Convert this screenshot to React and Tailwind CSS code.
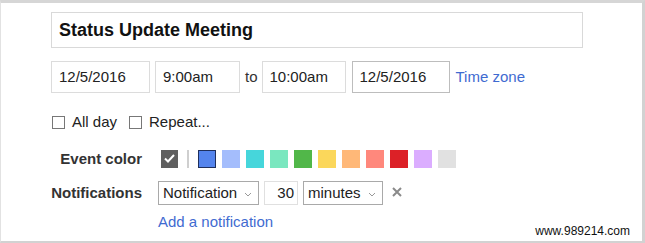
import React from "react";

const colors = [
  "#a4bdfc",
  "#46d6db",
  "#7ae7bf",
  "#51b749",
  "#fbd75b",
  "#ffb878",
  "#ff887c",
  "#dc2127",
  "#dbadff",
  "#e1e1e1",
];

function Box({ className = "", children }) {
  return (
    <div
      className={
        "h-[32px] flex items-center px-[7px] border bg-white text-[15px] text-[#222] " +
        className
      }
    >
      {children}
    </div>
  );
}

function Select({ className = "", children }) {
  return (
    <div
      className={
        "h-[24px] flex items-center justify-between pl-[4px] pr-[6px] border border-[#a9a9a9] bg-white text-[15px] text-[#222] " +
        className
      }
    >
      <span>{children}</span>
      <svg width="8" height="5" viewBox="0 0 8 5" className="mt-[2px]">
        <path d="M1 1 L4 4 L7 1" fill="none" stroke="#999" strokeWidth="1" />
      </svg>
    </div>
  );
}

function Check({ label }) {
  return (
    <label className="flex items-center gap-[7px]">
      <span className="w-[13px] h-[13px] border border-[#777] bg-white" />
      <span>{label}</span>
    </label>
  );
}

export default function App() {
  return (
    <div
      className="relative w-[645px] h-[243px] bg-white border-t-[3px] border-r-[3px] border-b-[2px] border-l border-t-[#d6d6d6] border-r-[#d2d2d2] border-b-[#d2d2d2] border-l-[#e2e2e2] overflow-hidden"
      style={{ fontFamily: '"Liberation Sans", Arial, sans-serif' }}
    >
      <div className="pl-[50px] pt-[9px]">
        <div className="w-[532px] h-[36px] border border-[#d9d9d9] flex items-center pl-[7px] text-[18px] font-bold text-[#111]">
          Status Update Meeting
        </div>

        <div className="mt-[13px] flex items-center">
          <Box className="w-[99px] border-[#dcdcdc]">12/5/2016</Box>
          <Box className="w-[85px] ml-[5px] border-[#dcdcdc]">9:00am</Box>
          <span className="ml-[5px] mr-[4px] text-[15px] text-[#333]">to</span>
          <Box className="w-[84px] border-[#dcdcdc]">10:00am</Box>
          <Box className="w-[98px] ml-[6px] border-[#bdbdbd]">12/5/2016</Box>
          <span className="ml-[6px] text-[15px] text-[#3f6bd1]">Time zone</span>
        </div>

        <div className="mt-[18px] flex items-center gap-[12px] text-[15px] text-[#222] pl-[1px]">
          <Check label="All day" />
          <Check label="Repeat..." />
        </div>

        <div className="mt-[14px] flex items-center">
          <div className="w-[91px] text-right text-[15px] font-bold text-[#333]">
            Event color
          </div>
          <div className="ml-[19px] flex items-center">
            <div className="w-[17px] h-[18px] bg-[#5f5f5f] flex items-center justify-center">
              <svg width="11" height="9" viewBox="0 0 11 9">
                <path
                  d="M1 4.5 L4 7.5 L10 1"
                  fill="none"
                  stroke="#fff"
                  strokeWidth="2"
                />
              </svg>
            </div>
            <div className="ml-[9px] w-[2px] h-[18px] bg-[#cfcfcf]" />
            <div className="ml-[9px] w-[18px] h-[18px] bg-[#5484ed] border border-[#1f2f5c]" />
            <div className="ml-[6px] flex gap-[6px]">
              {colors.map((c) => (
                <div
                  key={c}
                  className="w-[18px] h-[18px]"
                  style={{ backgroundColor: c }}
                />
              ))}
            </div>
          </div>
        </div>

        <div className="mt-[11px] flex items-center">
          <div className="w-[91px] text-right text-[15px] font-bold text-[#333]">
            Notifications
          </div>
          <div className="ml-[16px] flex items-center">
            <Select className="w-[101px]">Notification</Select>
            <div className="ml-[5px] w-[34px] h-[24px] border border-[#e0e0e0] flex items-center justify-end pr-[3px] text-[15px] text-[#222]">
              30
            </div>
            <Select className="ml-[5px] w-[80px]">minutes</Select>
            <svg width="10" height="10" viewBox="0 0 10 10" className="ml-[9px] mb-[3px]">
              <path d="M1 1 L9 9 M9 1 L1 9" stroke="#8a8a8a" strokeWidth="2" />
            </svg>
          </div>
        </div>

        <div className="mt-[6px] ml-[107px] text-[15px] text-[#3f6bd1]">
          Add a notification
        </div>
      </div>

      <div className="absolute right-[12px] bottom-[1px] text-[12px] text-[#111]">
        www.989214.com
      </div>
    </div>
  );
}
